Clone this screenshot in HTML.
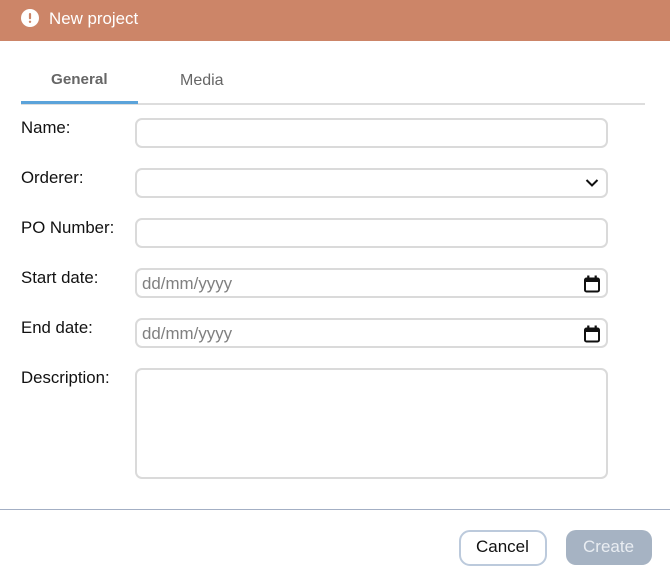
<!DOCTYPE html>
<html>
<head>
<meta charset="utf-8">
<style>
html,body{margin:0;padding:0;background:#fff;}
#w{width:670px;height:581px;position:relative;overflow:hidden;font-family:"Liberation Sans",sans-serif;color:#111;font-size:16.8px;filter:blur(0.35px);background:#fff;}
.abs{position:absolute;white-space:nowrap;line-height:20px;}
.box{position:absolute;left:135px;width:469px;height:26px;border:2px solid #dadada;border-radius:7px;background:#fff;}
.ph{color:#808080;font-size:16.9px;}
</style>
</head>
<body>
<div id="w">
<div style="position:absolute;left:0;top:0;width:670px;height:41px;background:#cc8568"></div>
<svg style="position:absolute;left:21px;top:9px" width="18" height="18" viewBox="0 0 18 18"><circle cx="9" cy="9" r="9" fill="#fff"/><rect x="7.9" y="4" width="2.2" height="6.2" rx="1" fill="#cc8568"/><circle cx="9" cy="12.8" r="1.2" fill="#cc8568"/></svg>
<div class="abs" style="left:49px;top:9px;color:#fff;font-size:16.9px">New project</div>

<div class="abs" style="left:51px;top:70px;color:#666;font-weight:bold;font-size:15.2px">General</div>
<div class="abs" style="left:180px;top:71px;color:#666;font-size:16px">Media</div>
<div style="position:absolute;left:21px;top:103px;width:624px;height:2px;background:#ddd"></div>
<div style="position:absolute;left:21px;top:101px;width:117px;height:3px;background:#5ba3da"></div>

<div class="abs" style="left:21px;top:118px">Name:</div>
<div class="box" style="top:118px"></div>

<div class="abs" style="left:21px;top:168px">Orderer:</div>
<div class="box" style="top:168px"></div>
<svg style="position:absolute;left:585px;top:178px" width="14" height="10" viewBox="0 0 14 10"><path d="M1.5 2 L7 7.5 L12.5 2" fill="none" stroke="#111" stroke-width="2"/></svg>

<div class="abs" style="left:21px;top:218px">PO Number:</div>
<div class="box" style="top:218px"></div>

<div class="abs" style="left:21px;top:268px">Start date:</div>
<div class="box" style="top:268px"></div>
<div class="abs ph" style="left:142px;top:274px">dd/mm/yyyy</div>
<svg style="position:absolute;left:584px;top:275px" width="17" height="18" viewBox="0 0 17 18"><path d="M2.5 3.5 H13.5 A1.5 1.5 0 0 1 15 5 V15 A1.5 1.5 0 0 1 13.5 16.5 H2.5 A1.5 1.5 0 0 1 1 15 V5 A1.5 1.5 0 0 1 2.5 3.5 Z" fill="none" stroke="#111" stroke-width="2"/><rect x="1" y="3" width="14" height="4" fill="#111"/><rect x="3.2" y="0.5" width="2.2" height="3" fill="#111"/><rect x="10.6" y="0.5" width="2.2" height="3" fill="#111"/></svg>

<div class="abs" style="left:21px;top:318px">End date:</div>
<div class="box" style="top:318px"></div>
<div class="abs ph" style="left:142px;top:324px">dd/mm/yyyy</div>
<svg style="position:absolute;left:584px;top:325px" width="17" height="18" viewBox="0 0 17 18"><path d="M2.5 3.5 H13.5 A1.5 1.5 0 0 1 15 5 V15 A1.5 1.5 0 0 1 13.5 16.5 H2.5 A1.5 1.5 0 0 1 1 15 V5 A1.5 1.5 0 0 1 2.5 3.5 Z" fill="none" stroke="#111" stroke-width="2"/><rect x="1" y="3" width="14" height="4" fill="#111"/><rect x="3.2" y="0.5" width="2.2" height="3" fill="#111"/><rect x="10.6" y="0.5" width="2.2" height="3" fill="#111"/></svg>

<div class="abs" style="left:21px;top:368px">Description:</div>
<div class="box" style="top:368px;height:107px"></div>

<div style="position:absolute;left:0;top:509px;width:670px;height:1px;background:#a3afc4"></div>
<div style="position:absolute;left:459px;top:530px;width:84px;height:32px;border:2px solid #bccadc;border-radius:11px;background:#fff"></div>
<div class="abs" style="left:476px;top:537px;font-size:17px">Cancel</div>
<div style="position:absolute;left:566px;top:530px;width:86px;height:35px;border-radius:10px;background:#a6b3c3"></div>
<div class="abs" style="left:583px;top:537px;font-size:17px;color:#e9edf2">Create</div>
</div>
</body>
</html>
